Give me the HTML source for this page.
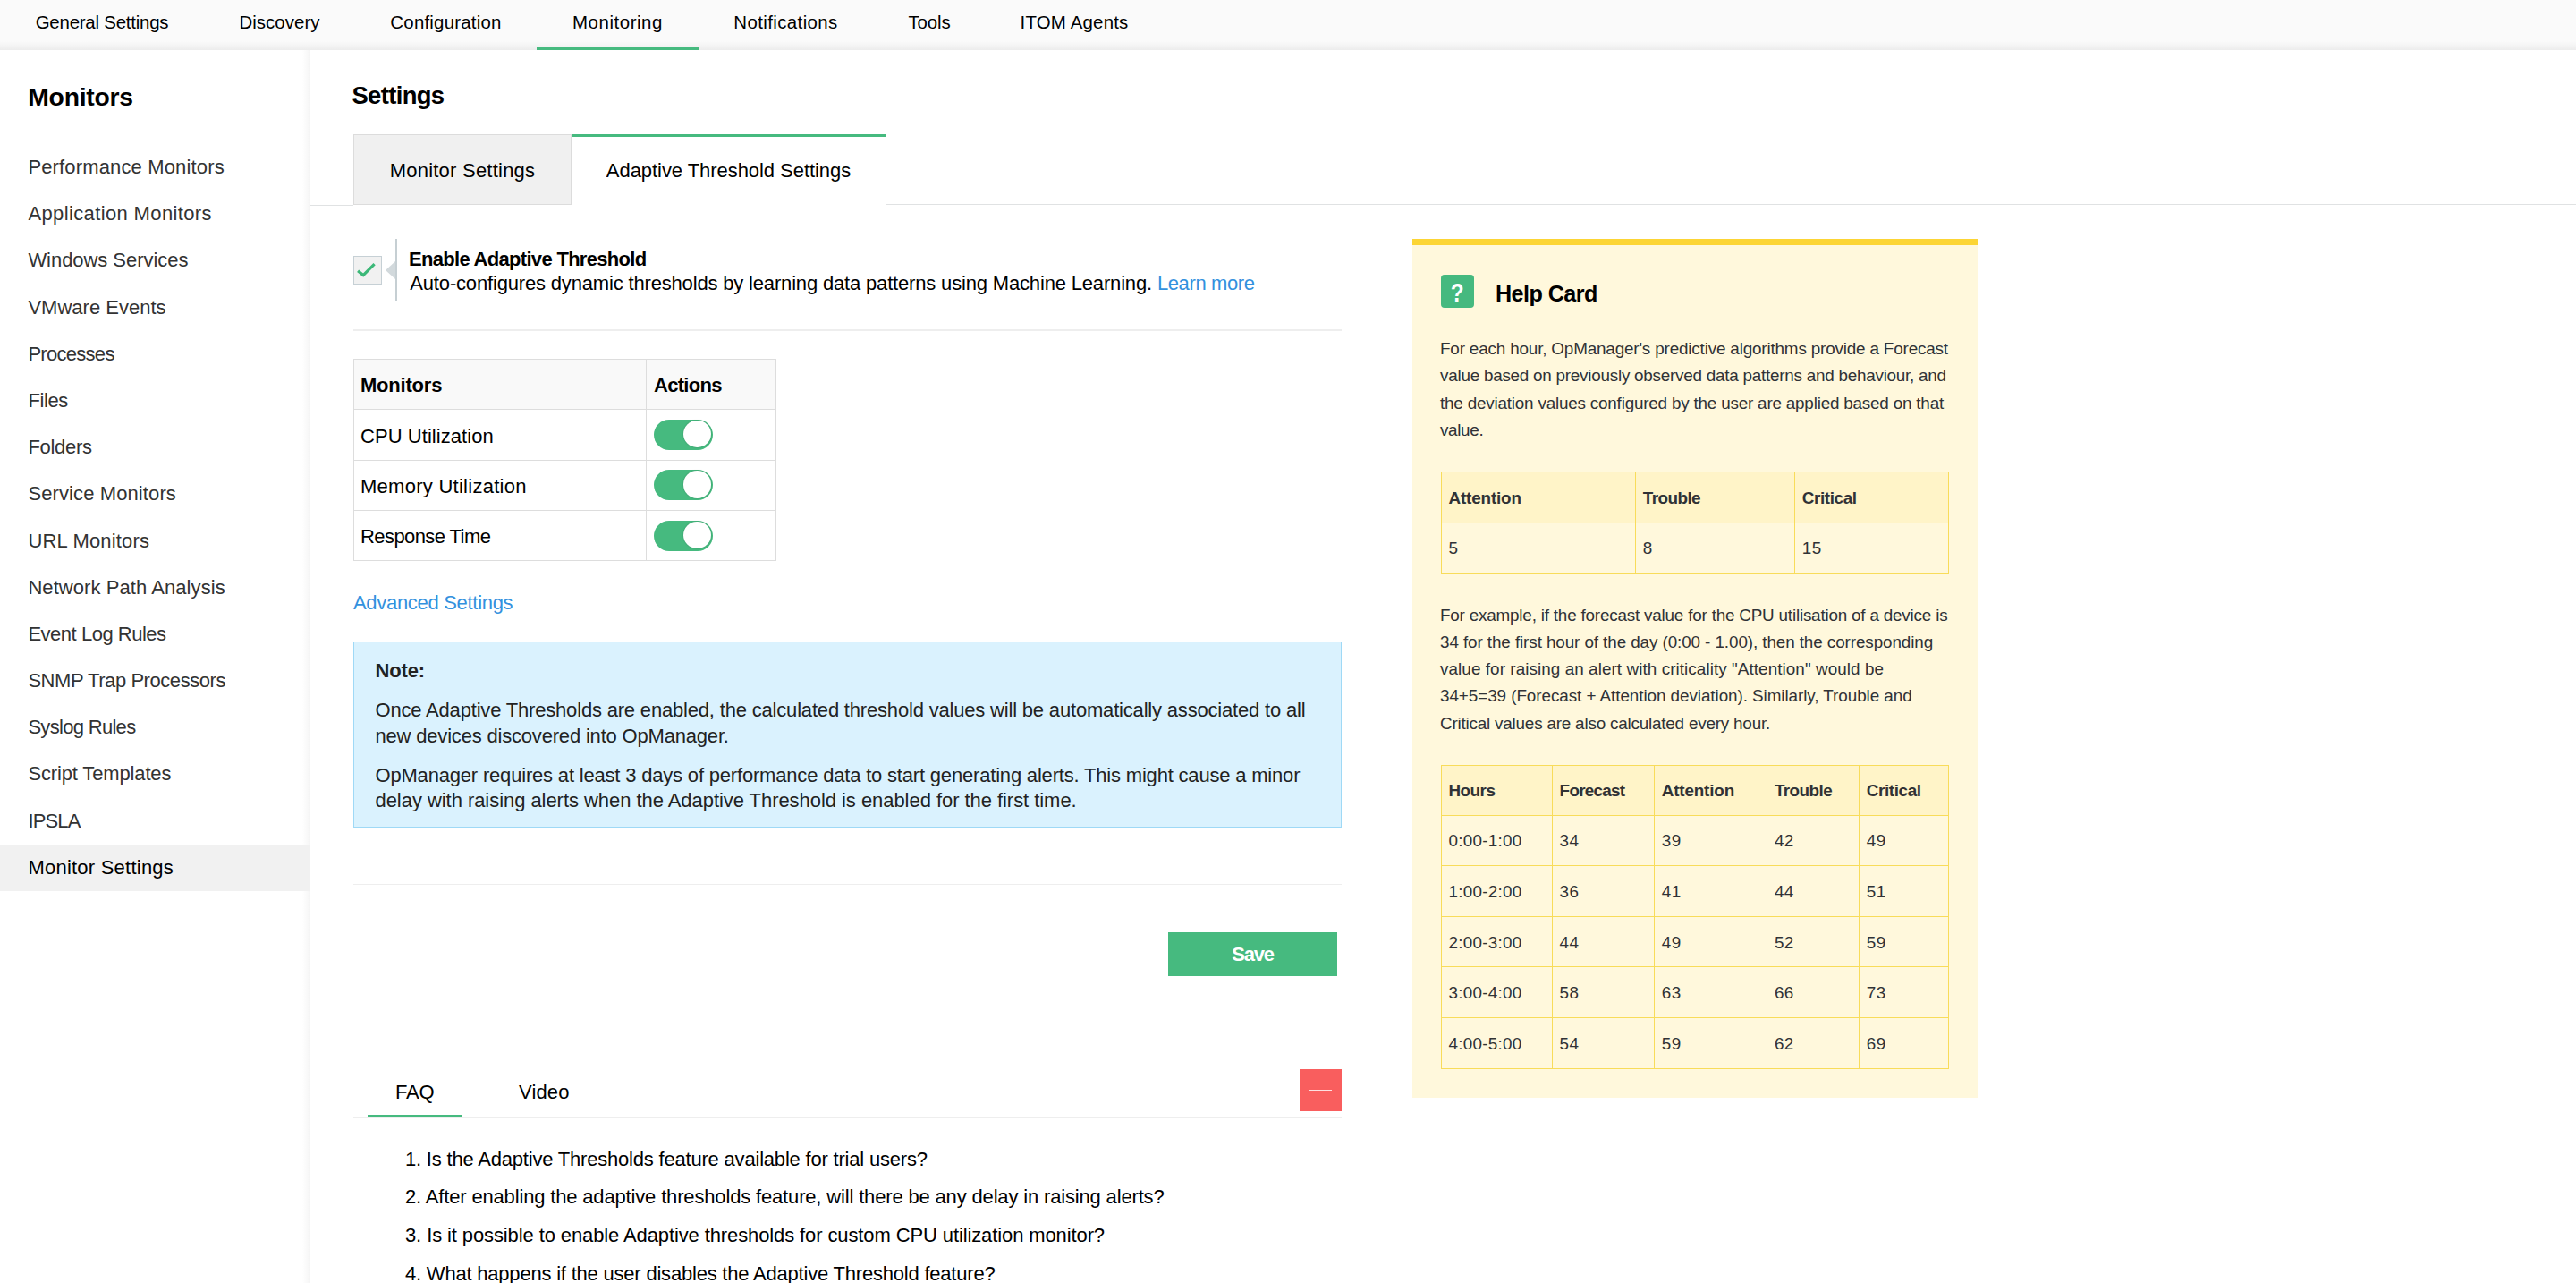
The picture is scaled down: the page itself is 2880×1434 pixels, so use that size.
<!DOCTYPE html>
<html lang="en"><head>
<meta charset="utf-8">
<title>Adaptive Threshold Settings</title>
<style>
*{box-sizing:border-box;margin:0;padding:0}
html,body{width:2880px;height:1434px;overflow:hidden;background:#fff}
@media (max-width:2000px){html{width:1440px;height:717px}body{zoom:.5}}
body{position:relative;font-family:"Liberation Sans",sans-serif;font-size:22px;color:#000;-webkit-font-smoothing:antialiased}
a{text-decoration:none;color:inherit}
ul,ol{list-style:none}
.t{white-space:nowrap;display:inline-block}

/* top navigation */
.topnav{--wf:1.012;position:absolute;left:0;top:0;width:2880px;height:56px;background:linear-gradient(#fafafa 0,#fafafa 46px,#f4f4f4 51px,#ececec 56px);white-space:nowrap;font-size:20.43px}
.topnav a{position:absolute;top:0;height:56px;line-height:50px;text-align:center;color:#000}
.topnav a.on{border-bottom:4px solid #46ba7f}

/* sidebar */
.side{position:absolute;left:0;top:56px;width:347px;height:1378px;background:linear-gradient(90deg,#fff 0,#fff 338px,#f5f5f5 347px)}
.side h2{position:absolute;left:31.3px;top:32.3px;font-size:28.3px;font-weight:700;line-height:40px}
.side ul{--wf:1.012;position:absolute;left:0;top:105px;width:347px}
.side li{height:52.2px;line-height:52.2px;padding-left:31.4px;color:#333}
.side li.sel{background:#f1f1f1;color:#000}

/* main */
.main{position:absolute;left:347px;top:56px;width:2533px;height:1378px}
.main h1{position:absolute;left:46.5px;top:30.6px;font-size:27.4px;font-weight:700;line-height:40px}
.tabline{position:absolute;left:0;top:173px;width:48px;height:1px;background:#e0e2e3}
.tabline.r{left:643px;top:172px;width:1890px}
.tab{--wf:1.012;position:absolute;top:94px;height:79px;line-height:80px;text-align:center}
.tab1{left:48px;width:244px;background:#f0f0f0;border:1px solid #dcdcdc;border-bottom-color:#dcdcdc;box-shadow:0 1px 0 #fff}
.tab2{left:292px;width:352px;background:#fff;border-top:3px solid #46ba7f;border-right:1px solid #dcdcdc;height:79px;line-height:75px}

/* enable row */
.chk{position:absolute;left:48px;top:230px;width:32px;height:32px;background:#f1f1f1;border:1px solid #c6d0d5}
.chk svg{position:absolute;left:0;top:0}
.tri{position:absolute;left:84px;top:236px;width:0;height:0;border-top:10px solid transparent;border-bottom:10px solid transparent;border-right:11px solid #d2d9dc}
.vbar{position:absolute;left:95px;top:211px;width:2px;height:69px;background:#c6cfd3}
.en1{position:absolute;left:110px;top:219.6px;line-height:28px;font-weight:700}
.en2{position:absolute;left:111.3px;top:247.1px;line-height:28px}
.lnk{color:#3391de}
.hr{position:absolute;left:48px;width:1105px;height:2px;background:#eee}
/* monitors table */
.mt{position:absolute;left:48px;top:345px;width:473px;border-collapse:collapse;table-layout:fixed}
.mt th,.mt td{border:1px solid #ddd;height:56.3px;padding:0 0 0 7px;text-align:left;vertical-align:middle;font-weight:400}
.mt th{background:#f9f9f9;font-weight:700}
.mt th+th{padding-left:8.5px}
.mt .t{position:relative;top:1.7px}
.ht .t{position:relative;top:1px}
.tg{display:block;position:relative;left:1.5px;width:66px;height:34px;border-radius:17px;background:#46ba7f}
.tg i{position:absolute;left:33px;top:1px;width:30.5px;height:30.5px;border-radius:50%;background:#fff;box-shadow:0 0 2px rgba(0,0,0,.22)}
.adv{position:absolute;left:48px;top:603.7px;line-height:28px;color:#3391de}
/* note */
.note{position:absolute;left:48px;top:661px;width:1105px;height:208px;background:#daf2fe;border:1px solid #9fd9f6;color:#222}
.note b,.note span.l{position:absolute;left:23.5px;line-height:28px;white-space:nowrap}
/* save */
.save{position:absolute;left:959px;top:986px;width:189px;height:49px;background:#46ba7f;color:#fff;font-weight:700;text-align:center;line-height:50.6px}
/* faq */
.ftab{position:absolute;top:1151.2px;line-height:28px}
.fline{position:absolute;left:64px;top:1190px;width:106px;height:3px;background:#46ba7f}
.close{position:absolute;left:1106px;top:1139px;width:47px;height:47px;background:#f95e5e}
.close i{position:absolute;left:11px;top:23px;width:24.5px;height:1.4px;background:#fde0e0}
.faq{position:absolute;left:106px;top:1218.7px}
.faq li{height:42.7px;line-height:42.7px;white-space:nowrap}

/* help card */
.help{position:absolute;left:1232px;top:211px;width:632px;height:960px;background:#fff8dc;border-top:7px solid #fcd535;font-size:18.86px;color:#303236}
.hicon{position:absolute;left:32px;top:33px;width:37px;height:37px;border-radius:4px;background:#45b97f;color:#fff;font-weight:700;font-size:30.4px;line-height:39px;text-align:center}
.hicon span{display:inline-block;transform:scaleX(.8)}
.help h3{position:absolute;left:93px;top:37.2px;font-size:25.15px;font-weight:700;line-height:34px;color:#000}
.help p{position:absolute;left:31px;width:569px}
.help p span.l{display:block;height:30.3px;line-height:30.3px;white-space:nowrap}
.ht{position:absolute;left:32px;width:568px;border-collapse:collapse;table-layout:fixed}
.ht th,.ht td{border:1px solid #f8dc5a;height:56.6px;padding:0 0 0 7.5px;text-align:left;vertical-align:middle;font-weight:400}
.ht th{background:#fff4c8;font-weight:700}
.ht.t2 th{height:55.6px}
</style>
</head>
<body>

<nav class="topnav">
  <a style="left:0;width:228px"><span class="t" style="letter-spacing: -0.221px;">General Settings</span></a>
  <a style="left:228px;width:169px"><span class="t" style="letter-spacing: 0.039px;">Discovery</span></a>
  <a style="left:397px;width:203px"><span class="t" style="letter-spacing: 0.214px;">Configuration</span></a>
  <a class="on" style="left:600px;width:181px"><span class="t" style="letter-spacing: 0.557px;">Monitoring</span></a>
  <a style="left:781px;width:195px"><span class="t" style="letter-spacing: 0.404px;">Notifications</span></a>
  <a style="left:976px;width:126px"><span class="t" style="letter-spacing: -0.148px;">Tools</span></a>
  <a style="left:1102px;width:198px"><span class="t" style="letter-spacing: 0.19px;">ITOM Agents</span></a>
</nav>

<aside class="side">
  <h2><span class="t" style="letter-spacing: -0.262px;">Monitors</span></h2>
  <ul>
    <li><span class="t" style="letter-spacing: 0.151px;">Performance Monitors</span></li>
    <li><span class="t" style="letter-spacing: 0.372px;">Application Monitors</span></li>
    <li><span class="t" style="letter-spacing: -0.048px;">Windows Services</span></li>
    <li><span class="t" style="letter-spacing: 0.014px;">VMware Events</span></li>
    <li><span class="t" style="letter-spacing: -0.713px;">Processes</span></li>
    <li><span class="t" style="letter-spacing: -0.382px;">Files</span></li>
    <li><span class="t" style="letter-spacing: -0.279px;">Folders</span></li>
    <li><span class="t" style="letter-spacing: 0.106px;">Service Monitors</span></li>
    <li><span class="t" style="letter-spacing: 0.172px;">URL Monitors</span></li>
    <li><span class="t" style="letter-spacing: 0.07px;">Network Path Analysis</span></li>
    <li><span class="t" style="letter-spacing: -0.479px;">Event Log Rules</span></li>
    <li><span class="t" style="letter-spacing: -0.442px;">SNMP Trap Processors</span></li>
    <li><span class="t" style="letter-spacing: -0.693px;">Syslog Rules</span></li>
    <li><span class="t" style="letter-spacing: -0.144px;">Script Templates</span></li>
    <li><span class="t" style="letter-spacing: -0.837px;">IPSLA</span></li>
    <li class="sel"><span class="t" style="letter-spacing: 0.231px;">Monitor Settings</span></li>
  </ul>
</aside>

<main class="main">
  <h1><span class="t" style="letter-spacing: -0.645px;">Settings</span></h1>
  <div class="tabline"></div>
  <div class="tabline r"></div>
  <div class="tab tab1"><span class="t" style="letter-spacing: 0.231px;">Monitor Settings</span></div>
  <div class="tab tab2"><span class="t" style="letter-spacing: -0.054px;">Adaptive Threshold Settings</span></div>

  <section class="enable">
    <div class="chk"><svg width="30" height="30" viewBox="0 0 30 30"><path d="M4.1 15.7 L10.1 20.6 L22.6 8.1" fill="none" stroke="#3cb878" stroke-width="3.2"></path></svg></div>
    <div class="tri"></div>
    <div class="vbar"></div>
    <div class="en1"><span class="t" style="letter-spacing: -0.692px;">Enable Adaptive Threshold</span></div>
    <div class="en2"><span class="t" style="letter-spacing: -0.169px;">Auto-configures dynamic thresholds by learning data patterns using Machine Learning.&nbsp;</span><a class="lnk"><span class="t" style="letter-spacing: -0.381px;">Learn more</span></a></div>
  </section>
  <div class="hr" style="top:312px"></div>

  <table class="mt">
    <colgroup><col style="width:326.5px"><col></colgroup>
    <thead><tr><th><span class="t" style="letter-spacing: -0.204px;">Monitors</span></th><th><span class="t" style="letter-spacing: -0.7px;">Actions</span></th></tr></thead>
    <tbody>
      <tr><td><span class="t" style="letter-spacing: 0.053px;">CPU Utilization</span></td><td><span class="tg"><i></i></span></td></tr>
      <tr><td><span class="t" style="letter-spacing: 0.266px;">Memory Utilization</span></td><td><span class="tg"><i></i></span></td></tr>
      <tr><td><span class="t" style="letter-spacing: -0.579px;">Response Time</span></td><td><span class="tg"><i></i></span></td></tr>
    </tbody>
  </table>

  <a class="adv"><span class="t" style="letter-spacing: -0.304px;">Advanced Settings</span></a>

  <div class="note">
    <b style="top:18px"><span class="t" style="letter-spacing: -0.141px;">Note:</span></b>
    <span class="l" style="top:62px"><span class="t" style="letter-spacing: -0.183px;">Once Adaptive Thresholds are enabled, the calculated threshold values will be automatically associated to all</span></span>
    <span class="l" style="top:91px"><span class="t" style="letter-spacing: -0.187px;">new devices discovered into OpManager.</span></span>
    <span class="l" style="top:135px"><span class="t" style="letter-spacing: -0.186px;">OpManager requires at least 3 days of performance data to start generating alerts. This might cause a minor</span></span>
    <span class="l" style="top:163px"><span class="t" style="letter-spacing: -0.05px;">delay with raising alerts when the Adaptive Threshold is enabled for the first time.</span></span>
  </div>
  <div class="hr" style="top:932px;height:1px"></div>

  <div class="save"><span class="t" style="letter-spacing: -1.184px;">Save</span></div>

  <div class="ftab" style="left:95px"><span class="t" style="letter-spacing: -0.25px;">FAQ</span></div>
  <div class="ftab" style="left:233px"><span class="t" style="letter-spacing: 0.144px;">Video</span></div>
  <div class="hr" style="top:1193px;height:1px"></div>
  <div class="fline"></div>
  <div class="close"><i></i></div>
  <ol class="faq">
    <li><span class="t" style="letter-spacing: -0.197px;">1. Is the Adaptive Thresholds feature available for trial users?</span></li>
    <li><span class="t" style="letter-spacing: -0.16px;">2. After enabling the adaptive thresholds feature, will there be any delay in raising alerts?</span></li>
    <li><span class="t" style="letter-spacing: -0.111px;">3. Is it possible to enable Adaptive thresholds for custom CPU utilization monitor?</span></li>
    <li><span class="t" style="letter-spacing: -0.206px;">4. What happens if the user disables the Adaptive Threshold feature?</span></li>
  </ol>

  <aside class="help">
    <div class="hicon"><span>?</span></div>
    <h3><span class="t" style="letter-spacing: -0.558px;">Help Card</span></h3>
    <p style="top:101px">
      <span class="l"><span class="t" style="letter-spacing: -0.167px;">For each hour, OpManager's predictive algorithms provide a Forecast</span></span>
      <span class="l"><span class="t" style="letter-spacing: -0.24px;">value based on previously observed data patterns and behaviour, and</span></span>
      <span class="l"><span class="t" style="letter-spacing: -0.198px;">the deviation values configured by the user are applied based on that</span></span>
      <span class="l"><span class="t" style="letter-spacing: -0.341px;">value.</span></span>
    </p>
    <table class="ht" style="top:253px">
      <colgroup><col style="width:217.3px"><col style="width:178px"><col></colgroup>
      <thead><tr><th><span class="t" style="letter-spacing: -0.161px;">Attention</span></th><th><span class="t" style="letter-spacing: -0.555px;">Trouble</span></th><th><span class="t" style="letter-spacing: -0.389px;">Critical</span></th></tr></thead>
      <tbody><tr><td><span class="t" style="letter-spacing: 0.453px;">5</span></td><td><span class="t" style="letter-spacing: 0.453px;">8</span></td><td><span class="t" style="letter-spacing: 0.453px;">15</span></td></tr></tbody>
    </table>
    <p style="top:398.6px">
      <span class="l"><span class="t" style="letter-spacing: -0.197px;">For example, if the forecast value for the CPU utilisation of a device is</span></span>
      <span class="l"><span class="t" style="letter-spacing: -0.095px;">34 for the first hour of the day (0:00 - 1.00), then the corresponding</span></span>
      <span class="l"><span class="t" style="letter-spacing: 0.073px;">value for raising an alert with criticality "Attention" would be</span></span>
      <span class="l"><span class="t" style="letter-spacing: -0.064px;">34+5=39 (Forecast + Attention deviation). Similarly, Trouble and</span></span>
      <span class="l"><span class="t" style="letter-spacing: -0.2px;">Critical values are also calculated every hour.</span></span>
    </p>
    <table class="ht t2" style="top:581px">
      <colgroup><col style="width:124.1px"><col style="width:114.1px"><col style="width:126.2px"><col style="width:102.9px"><col></colgroup>
      <thead><tr><th><span class="t" style="letter-spacing: -0.516px;">Hours</span></th><th><span class="t" style="letter-spacing: -0.736px;">Forecast</span></th><th><span class="t" style="letter-spacing: -0.161px;">Attention</span></th><th><span class="t" style="letter-spacing: -0.555px;">Trouble</span></th><th><span class="t" style="letter-spacing: -0.389px;">Critical</span></th></tr></thead>
      <tbody>
        <tr><td><span class="t" style="letter-spacing: 0.264px;">0:00-1:00</span></td><td><span class="t" style="letter-spacing: 0.453px;">34</span></td><td><span class="t" style="letter-spacing: 0.453px;">39</span></td><td><span class="t" style="letter-spacing: 0.453px;">42</span></td><td><span class="t" style="letter-spacing: 0.453px;">49</span></td></tr>
        <tr><td><span class="t" style="letter-spacing: 0.264px;">1:00-2:00</span></td><td><span class="t" style="letter-spacing: 0.453px;">36</span></td><td><span class="t" style="letter-spacing: 0.453px;">41</span></td><td><span class="t" style="letter-spacing: 0.453px;">44</span></td><td><span class="t" style="letter-spacing: 0.453px;">51</span></td></tr>
        <tr><td><span class="t" style="letter-spacing: 0.264px;">2:00-3:00</span></td><td><span class="t" style="letter-spacing: 0.453px;">44</span></td><td><span class="t" style="letter-spacing: 0.453px;">49</span></td><td><span class="t" style="letter-spacing: 0.453px;">52</span></td><td><span class="t" style="letter-spacing: 0.453px;">59</span></td></tr>
        <tr><td><span class="t" style="letter-spacing: 0.264px;">3:00-4:00</span></td><td><span class="t" style="letter-spacing: 0.453px;">58</span></td><td><span class="t" style="letter-spacing: 0.453px;">63</span></td><td><span class="t" style="letter-spacing: 0.453px;">66</span></td><td><span class="t" style="letter-spacing: 0.453px;">73</span></td></tr>
        <tr><td><span class="t" style="letter-spacing: 0.264px;">4:00-5:00</span></td><td><span class="t" style="letter-spacing: 0.453px;">54</span></td><td><span class="t" style="letter-spacing: 0.453px;">59</span></td><td><span class="t" style="letter-spacing: 0.453px;">62</span></td><td><span class="t" style="letter-spacing: 0.453px;">69</span></td></tr>
      </tbody>
    </table>
  </aside>


</main>



</body></html>
